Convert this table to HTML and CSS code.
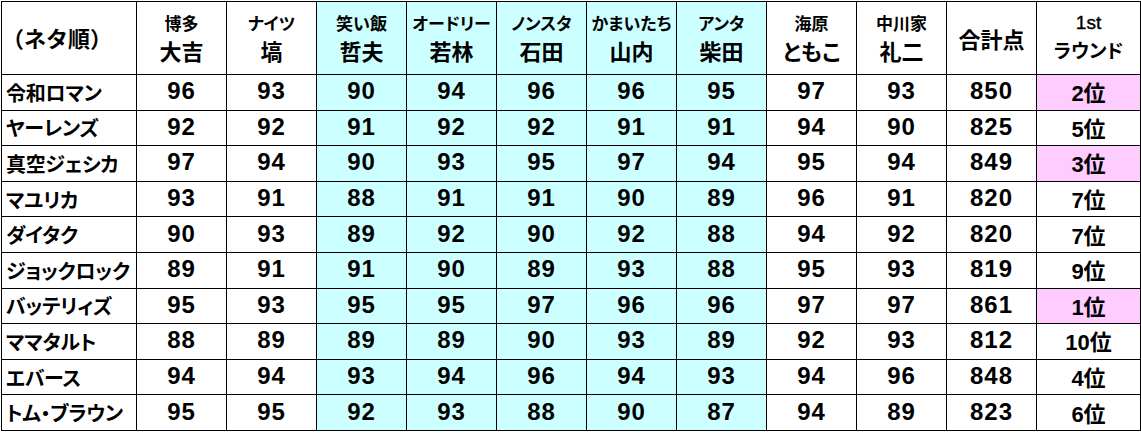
FILE: index.html
```html
<!DOCTYPE html>
<html lang="ja">
<head>
<meta charset="utf-8">
<title>スコア表</title>
<link rel="stylesheet" href="styles.css">
</head>
<body>
<table class="score">
  <colgroup>
    <col class="c-name">
    <col class="c-judge"><col class="c-judge"><col class="c-judge"><col class="c-judge"><col class="c-judge">
    <col class="c-judge"><col class="c-judge"><col class="c-judge"><col class="c-judge"><col class="c-judge">
    <col class="c-rank">
  </colgroup>
  <thead>
    <tr>
      <th class="corner">（ネタ順）</th>
      <th><span class="sm">博多</span><span class="lg">大吉</span></th>
      <th><span class="sm">ナイツ</span><span class="lg">塙</span></th>
      <th class="cy"><span class="sm">笑い飯</span><span class="lg">哲夫</span></th>
      <th class="cy"><span class="sm">オードリー</span><span class="lg">若林</span></th>
      <th class="cy"><span class="sm">ノンスタ</span><span class="lg">石田</span></th>
      <th class="cy"><span class="sm">かまいたち</span><span class="lg">山内</span></th>
      <th class="cy"><span class="sm">アンタ</span><span class="lg">柴田</span></th>
      <th><span class="sm">海原</span><span class="lg">ともこ</span></th>
      <th><span class="sm">中川家</span><span class="lg">礼二</span></th>
      <th><span class="lg">合計点</span></th>
      <th><span class="st">1st</span><span class="lg rd">ラウンド</span></th>
    </tr>
  </thead>
  <tbody>
    <tr><th>令和ロマン</th><td>96</td><td>93</td><td class="cy">90</td><td class="cy">94</td><td class="cy">96</td><td class="cy">96</td><td class="cy">95</td><td>97</td><td>93</td><td>850</td><td class="rank pk">2位</td></tr>
    <tr><th>ヤーレンズ</th><td>92</td><td>92</td><td class="cy">91</td><td class="cy">92</td><td class="cy">92</td><td class="cy">91</td><td class="cy">91</td><td>94</td><td>90</td><td>825</td><td class="rank">5位</td></tr>
    <tr><th>真空ジェシカ</th><td>97</td><td>94</td><td class="cy">90</td><td class="cy">93</td><td class="cy">95</td><td class="cy">97</td><td class="cy">94</td><td>95</td><td>94</td><td>849</td><td class="rank pk">3位</td></tr>
    <tr><th>マユリカ</th><td>93</td><td>91</td><td class="cy">88</td><td class="cy">91</td><td class="cy">91</td><td class="cy">90</td><td class="cy">89</td><td>96</td><td>91</td><td>820</td><td class="rank">7位</td></tr>
    <tr><th>ダイタク</th><td>90</td><td>93</td><td class="cy">89</td><td class="cy">92</td><td class="cy">90</td><td class="cy">92</td><td class="cy">88</td><td>94</td><td>92</td><td>820</td><td class="rank">7位</td></tr>
    <tr><th>ジョックロック</th><td>89</td><td>91</td><td class="cy">91</td><td class="cy">90</td><td class="cy">89</td><td class="cy">93</td><td class="cy">88</td><td>95</td><td>93</td><td>819</td><td class="rank">9位</td></tr>
    <tr><th>バッテリィズ</th><td>95</td><td>93</td><td class="cy">95</td><td class="cy">95</td><td class="cy">97</td><td class="cy">96</td><td class="cy">96</td><td>97</td><td>97</td><td>861</td><td class="rank pk">1位</td></tr>
    <tr><th>ママタルト</th><td>88</td><td>89</td><td class="cy">89</td><td class="cy">89</td><td class="cy">90</td><td class="cy">93</td><td class="cy">89</td><td>92</td><td>93</td><td>812</td><td class="rank">10位</td></tr>
    <tr><th>エバース</th><td>94</td><td>94</td><td class="cy">93</td><td class="cy">94</td><td class="cy">96</td><td class="cy">94</td><td class="cy">93</td><td>94</td><td>96</td><td>848</td><td class="rank">4位</td></tr>
    <tr><th>トム・ブラウン</th><td>95</td><td>95</td><td class="cy">92</td><td class="cy">93</td><td class="cy">88</td><td class="cy">90</td><td class="cy">87</td><td>94</td><td>89</td><td>823</td><td class="rank">6位</td></tr>
  </tbody>
</table>
</body>
</html>
```

FILE: styles.css
```css
html, body {
  margin: 0;
  padding: 0;
  background: #ffffff;
}

body {
  padding: 1px 0 0 1px;
  font-family: "Noto Sans CJK JP", "Liberation Sans", sans-serif;
  color: #000;
}

.score {
  border-collapse: collapse;
  table-layout: fixed;
  width: 1139px;
  font-feature-settings: "palt";
}

.c-name { width: 135px; }
.c-judge { width: 90px; }
.c-rank { width: 104px; }

.score th,
.score td {
  border: 1px solid #000;
  padding: 0;
  vertical-align: middle;
  text-align: center;
  font-weight: bold;
}

.score thead th {
  height: 70px;
}

.score tbody tr {
  height: 35.6px;
}

.score thead th .sm,
.score thead th .lg,
.score thead th .st {
  display: block;
}

.sm {
  font-size: 17px;
  line-height: 24px;
}

.lg {
  font-size: 22px;
  line-height: 30px;
}

.st {
  font-family: "Liberation Sans", sans-serif;
  font-size: 19px;
  line-height: 24px;
  font-weight: normal;
  -webkit-text-stroke: 0.4px #000;
}

.rd {
  font-size: 19px;
}

.score th.corner {
  text-align: left;
  font-size: 22px;
  padding-left: 0;
  padding-bottom: 2px;
  font-feature-settings: normal;
  letter-spacing: 0;
  white-space: nowrap;
}

.score tbody th {
  text-align: left;
  font-size: 20px;
  padding-left: 4px;
  letter-spacing: -0.3px;
  white-space: nowrap;
}

.score tbody td {
  font-family: "Liberation Sans", sans-serif;
  font-size: 24px;
  letter-spacing: 1px;
  padding-bottom: 2px;
}

.score tbody td.rank {
  font-family: "Liberation Sans", "Noto Sans CJK JP", sans-serif;
  font-size: 22px;
  letter-spacing: 0;
}

.cy {
  background: #ccffff;
}

.pk {
  background: #ffccff;
}
```
